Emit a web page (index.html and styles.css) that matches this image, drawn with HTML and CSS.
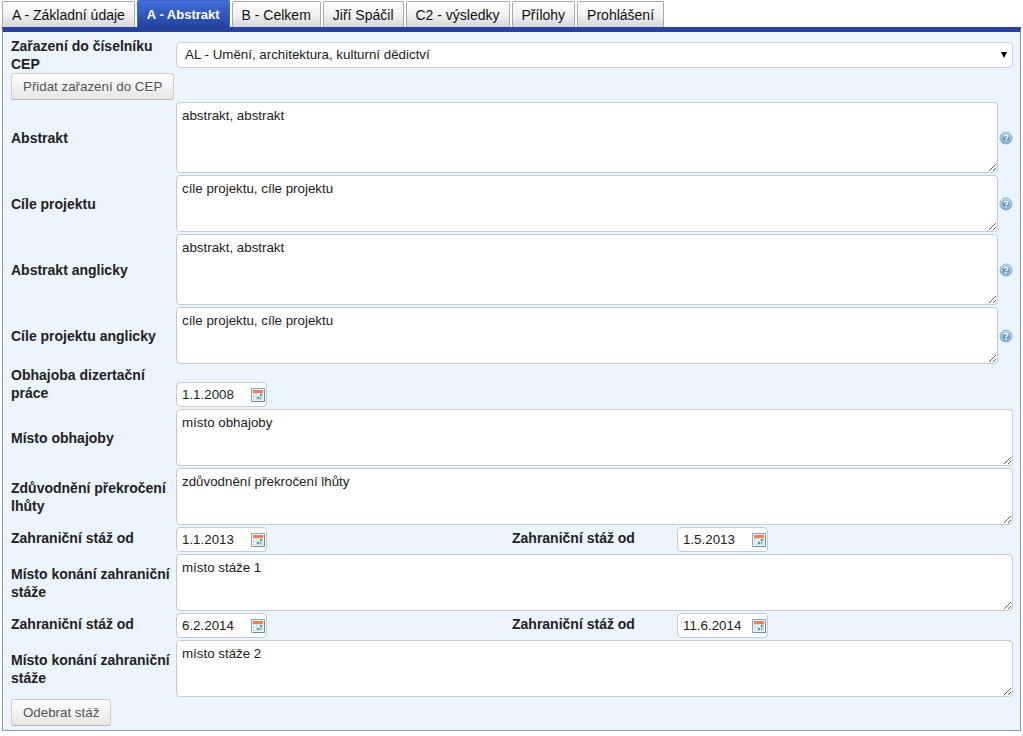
FILE: index.html
```html
<!DOCTYPE html>
<html lang="cs">
<head>
<meta charset="utf-8">
<title>A - Abstrakt</title>
<link rel="stylesheet" href="styles.css">
</head>
<body>
<svg class="symbols" aria-hidden="true">
  <defs>
    <linearGradient id="orb" x1="0" y1="0" x2="0" y2="1">
      <stop offset="0" stop-color="#d3e3f2"/><stop offset="1" stop-color="#5c93c6"/>
    </linearGradient>
  </defs>
  <symbol id="help" viewBox="0 0 14 14">
    <circle cx="7" cy="7" r="6" fill="url(#orb)" stroke="#8fb1d2"/>
    <circle cx="7" cy="7" r="4.2" fill="#6397c8" stroke="#c9dcee" stroke-width=".8"/>
    <path d="M5.2 5.8C5.3 3.6 8.9 3.7 8.8 5.7C8.7 6.9 7.1 6.8 7.1 8.2" fill="none" stroke="#fff" stroke-width="1.5"/>
    <rect x="6.3" y="9" width="1.6" height="1.4" fill="#fff"/>
  </symbol>
  <symbol id="calendar" viewBox="0 0 14 14">
    <rect x=".5" y=".5" width="13" height="13" fill="#edf3fa" stroke="#8ba5c4"/>
    <rect x="2" y="2" width="10" height="3" fill="#f0804f"/>
    <rect x="2" y="5" width="10" height="7" fill="#d3deea"/>
    <path d="M3 7h2M6 7h2M3 10h2" stroke="#fff" stroke-width="1.5"/>
    <path d="M9 7h2M6 10h2M9 10h1" stroke="#55a776" stroke-width="2"/>
    <path d="M13.5 3v10.5H3" fill="none" stroke="#668bb5"/>
  </symbol>
</svg>
<nav class="tabs">
  <a class="tab" href="#zaklad">A - Základní údaje</a>
  <a class="tab tab-active" href="#abstrakt" aria-current="page">A - Abstrakt</a>
  <a class="tab" href="#celkem">B - Celkem</a>
  <a class="tab" href="#spacil">Jiří Spáčil</a>
  <a class="tab" href="#vysledky">C2 - výsledky</a>
  <a class="tab" href="#prilohy">Přílohy</a>
  <a class="tab" href="#prohlaseni">Prohlášení</a>
</nav>
<form class="panel" id="abstrakt">
  <div class="group">
    <div class="row">
      <label class="label" for="cep">Zařazení do číselníku CEP</label>
      <div class="select-box">
        <select class="select" id="cep"><option>AL - Umění, architektura, kulturní dědictví</option></select>
        <svg class="arrow" viewBox="0 0 6 6" aria-hidden="true"><path d="M0 0h6L3 6z"/></svg>
      </div>
    </div>
    <button class="button" type="button">Přidat zařazení do CEP</button>
  </div>
  <div class="row">
    <label class="label" for="abs">Abstrakt</label>
    <div class="with-help"><textarea class="area area-tall" id="abs">abstrakt, abstrakt</textarea><button class="icon-button" type="button" aria-label="Nápověda"><svg class="icon"><use href="#help"/></svg></button></div>
  </div>
  <div class="row">
    <label class="label" for="cile">Cíle projektu</label>
    <div class="with-help"><textarea class="area" id="cile">cíle projektu, cíle projektu</textarea><button class="icon-button" type="button" aria-label="Nápověda"><svg class="icon"><use href="#help"/></svg></button></div>
  </div>
  <div class="row">
    <label class="label" for="abs-en">Abstrakt anglicky</label>
    <div class="with-help"><textarea class="area area-tall" id="abs-en">abstrakt, abstrakt</textarea><button class="icon-button" type="button" aria-label="Nápověda"><svg class="icon"><use href="#help"/></svg></button></div>
  </div>
  <div class="row">
    <label class="label" for="cile-en">Cíle projektu anglicky</label>
    <div class="with-help"><textarea class="area" id="cile-en">cíle projektu, cíle projektu</textarea><button class="icon-button" type="button" aria-label="Nápověda"><svg class="icon"><use href="#help"/></svg></button></div>
  </div>
  <div class="row row-defence">
    <label class="label" for="obhajoba">Obhajoba dizertační práce</label>
    <div class="date"><input class="date-input" id="obhajoba" type="text" value="1.1.2008"><button class="icon-button" type="button" aria-label="Kalendář"><svg class="icon"><use href="#calendar"/></svg></button></div>
  </div>
  <div class="row">
    <label class="label" for="misto">Místo obhajoby</label>
    <textarea class="area" id="misto">místo obhajoby</textarea>
  </div>
  <div class="row">
    <label class="label" for="duvod">Zdůvodnění překročení lhůty</label>
    <textarea class="area" id="duvod">zdůvodnění překročení lhůty</textarea>
  </div>
  <div class="pair">
    <div class="row">
      <label class="label" for="od1">Zahraniční stáž od</label>
      <div class="date"><input class="date-input" id="od1" type="text" value="1.1.2013"><button class="icon-button" type="button" aria-label="Kalendář"><svg class="icon"><use href="#calendar"/></svg></button></div>
    </div>
    <div class="row">
      <label class="label" for="do1">Zahraniční stáž od</label>
      <div class="date"><input class="date-input" id="do1" type="text" value="1.5.2013"><button class="icon-button" type="button" aria-label="Kalendář"><svg class="icon"><use href="#calendar"/></svg></button></div>
    </div>
  </div>
  <div class="row">
    <label class="label" for="staz1">Místo konání zahraniční stáže</label>
    <textarea class="area" id="staz1">místo stáže 1</textarea>
  </div>
  <div class="pair">
    <div class="row">
      <label class="label" for="od2">Zahraniční stáž od</label>
      <div class="date"><input class="date-input" id="od2" type="text" value="6.2.2014"><button class="icon-button" type="button" aria-label="Kalendář"><svg class="icon"><use href="#calendar"/></svg></button></div>
    </div>
    <div class="row">
      <label class="label" for="do2">Zahraniční stáž od</label>
      <div class="date"><input class="date-input" id="do2" type="text" value="11.6.2014"><button class="icon-button" type="button" aria-label="Kalendář"><svg class="icon"><use href="#calendar"/></svg></button></div>
    </div>
  </div>
  <div class="row">
    <label class="label" for="staz2">Místo konání zahraniční stáže</label>
    <textarea class="area" id="staz2">místo stáže 2</textarea>
  </div>
  <button class="button" type="button">Odebrat stáž</button>
</form>
</body>
</html>
```

FILE: styles.css
```css
* { box-sizing: border-box; }
body {
  margin: 0 2px;
  background: #fff;
  color: #222;
  font: 14px/18px "Liberation Sans", Arial, sans-serif;
}
button, input, select, textarea {
  margin: 0;
  color: inherit;
  font-family: inherit;
  line-height: inherit;
}
.symbols { position: absolute; width: 0; height: 0; }

.tabs { display: flex; align-items: flex-end; gap: 2px; height: 27px; }
.tab {
  height: 26px;
  padding: 4px 9px;
  border: 1px solid #aaa;
  border-bottom: 0;
  border-radius: 2px 2px 0 0;
  background: linear-gradient(#fff, #f2f2f3 50%, #d6d6da);
  color: #111;
  text-decoration: none;
  white-space: nowrap;
}
.tab-active {
  height: 27px;
  padding: 5px 9px;
  border-color: #3c66d0;
  background: linear-gradient(#416fdc, #25429c);
  color: #fff;
  font-size: 13px;
  font-weight: bold;
}

.panel {
  display: flex;
  flex-direction: column;
  align-items: stretch;
  gap: 2px;
  padding: 5px 7px 4px 8px;
  border: 1px solid #929ba5;
  border-top: 5px solid #25429c;
  background: #ecf4fe;
}
.group { display: flex; flex-direction: column; }
.row { display: grid; grid-template-columns: 165px 1fr; align-items: center; }
.row-defence { min-height: 41px; align-items: start; }
.row-defence .date { align-self: end; }
.pair { display: grid; grid-template-columns: 1fr 1fr; }
.pair .label { align-self: start; padding-top: 2px; }
.label { font-weight: bold; }

.select-box { position: relative; }
.select {
  display: block;
  width: 100%;
  height: 26px;
  padding: 0 20px 0 8px;
  border: 1px solid #ccd0d5;
  border-radius: 4px;
  background: #fff;
  appearance: none;
}
.arrow { position: absolute; top: 10px; right: 6px; width: 6px; height: 6px; pointer-events: none; }

.area {
  display: block;
  width: 100%;
  height: 57px;
  padding: 4px 5px;
  border: 1px solid #c5cad0;
  border-radius: 4px;
  background: #fff;
}
.area-tall { height: 71px; }
.with-help { display: grid; grid-template-columns: 1fr 14px; align-items: center; gap: 1px; }
.icon-button { width: 14px; height: 14px; padding: 0; border: 0; background: none; }
.icon { display: block; width: 14px; height: 14px; }

.date {
  display: flex;
  align-items: center;
  width: 91px;
  height: 25px;
  padding-right: 1px;
  border: 1px solid #c5cad0;
  border-radius: 4px;
  background: #fff;
}
.date-input { flex: 1; min-width: 0; padding: 0 0 0 5px; border: 0; background: none; }

.button {
  align-self: flex-start;
  height: 27px;
  padding: 0 11px;
  border: 1px solid #ccc;
  border-bottom-color: #b5b5b5;
  border-radius: 3px;
  background: linear-gradient(#fff, #e6e6e6);
  color: #555;
}
```
